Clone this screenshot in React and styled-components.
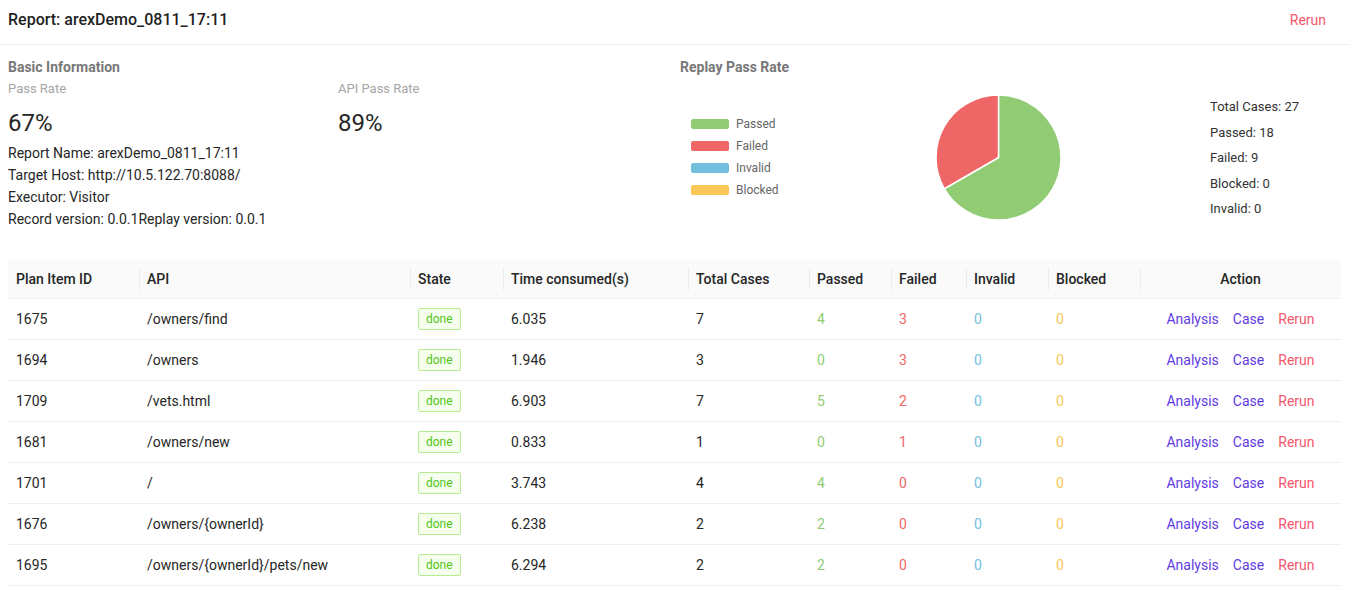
import React from "react";
import styled, { createGlobalStyle } from "styled-components";

const Global = createGlobalStyle`
  html, body { margin: 0; padding: 0; background: #fff; }
  body {
    font-family: Roboto, "Open Sans", sans-serif;
    font-size: 14px;
    color: rgba(0,0,0,0.85);
  }
  * { box-sizing: border-box; }
`;

const COLORS = {
  passed: "#91cc75",
  failed: "#ee6666",
  invalid: "#73c0de",
  blocked: "#fac858",
  primary: "#603be3",
  danger: "#f5576c",
};

const Page = styled.div`
  width: 1350px;
`;

const Header = styled.div`
  height: 45px;
  display: flex;
  align-items: center;
  justify-content: space-between;
  padding: 0 24px 4px 8px;
  border-bottom: 1px solid #f0f0f0;
`;

const Title = styled.h1`
  margin: 0;
  font-size: 16px;
  font-weight: 500;
  color: #1f1f1f;
  line-height: 24px;
`;

const LinkButton = styled.a`
  font-size: 14px;
  line-height: 22px;
  cursor: pointer;
  color: ${(p) => (p.$danger ? COLORS.danger : COLORS.primary)};
`;

const Content = styled.div`
  padding: 11px 9px 0 8px;
`;

const Overview = styled.div`
  display: grid;
  grid-template-columns: 672px 1fr;
`;

const SectionTitle = styled.div`
  font-size: 14px;
  font-weight: 700;
  color: #777;
  line-height: 22px;
`;

const StatGrid = styled.div`
  display: grid;
  grid-template-columns: 330px 330px;
`;

const StatTitle = styled.div`
  font-size: 13px;
  line-height: 22px;
  color: #a6a6a6;
  margin-bottom: 4px;
`;

const StatValue = styled.div`
  font-size: 24px;
  line-height: 38px;
  color: #262626;
`;

const InfoLine = styled.div`
  font-size: 14px;
  line-height: 22px;
  color: #262626;
`;

const ChartRow = styled.div`
  display: grid;
  grid-template-columns: 253px 130px auto;
`;

const Legend = styled.div`
  padding: 35px 0 0 11px;
  display: flex;
  flex-direction: column;
`;

const LegendItem = styled.div`
  display: flex;
  align-items: center;
  height: 22px;
  font-family: Roboto, sans-serif;
  font-size: 12px;
  color: #666;
`;

const Swatch = styled.span`
  width: 38px;
  height: 10px;
  border-radius: 2px;
  margin-right: 7px;
  background: ${(p) => p.$color};
`;

const PieSvg = styled.svg`
  margin-top: 15px;
  display: block;
`;

const Totals = styled.div`
  margin: 16px 0 0 147px;
  font-family: Roboto, sans-serif;
  font-size: 13px;
  line-height: 25.5px;
  color: #333;
`;

const Table = styled.table`
  margin-top: 30px;
  width: 1333px;
  border-collapse: collapse;
  table-layout: fixed;
`;

const Th = styled.th`
  position: relative;
  background: #fafafa;
  font-weight: 500;
  text-align: ${(p) => p.$align || "left"};
  color: #262626;
  font-size: 14px;
  line-height: 22px;
  padding: 8px 8px;
  height: 37px;
  border-bottom: 1px solid #f0f0f0;
  &::before {
    content: "";
    display: ${(p) => (p.$first ? "none" : "block")};
    position: absolute;
    left: 0;
    top: 50%;
    transform: translateY(-50%);
    width: 1px;
    height: 22px;
    background: #ececec;
  }
`;

const Td = styled.td`
  padding: 9px 8px;
  line-height: 22px;
  height: 40px;
  font-size: 14px;
  color: ${(p) => p.$color || "#262626"};
  text-align: ${(p) => p.$align || "left"};
  border-bottom: 1px solid #f0f0f0;
  vertical-align: middle;
`;

const Tag = styled.span`
  display: inline-block;
  vertical-align: top;
  font-size: 12px;
  line-height: 20px;
  padding: 0 7px;
  border: 1px solid #b7eb8f;
  background: #f6ffed;
  color: #52c41a;
  border-radius: 2px;
`;

const Actions = styled.div`
  display: flex;
  justify-content: center;
  gap: 14px;
`;

const columns = [
  { key: "id", title: "Plan Item ID", width: 131 },
  { key: "api", title: "API", width: 271 },
  { key: "state", title: "State", width: 93 },
  { key: "time", title: "Time consumed(s)", width: 185 },
  { key: "total", title: "Total Cases", width: 121 },
  { key: "passed", title: "Passed", width: 82 },
  { key: "failed", title: "Failed", width: 75 },
  { key: "invalid", title: "Invalid", width: 82 },
  { key: "blocked", title: "Blocked", width: 92 },
  { key: "action", title: "Action", width: 201 },
];

const rows = [
  ["1675", "/owners/find", "6.035", 7, 4, 3, 0, 0],
  ["1694", "/owners", "1.946", 3, 0, 3, 0, 0],
  ["1709", "/vets.html", "6.903", 7, 5, 2, 0, 0],
  ["1681", "/owners/new", "0.833", 1, 0, 1, 0, 0],
  ["1701", "/", "3.743", 4, 4, 0, 0, 0],
  ["1676", "/owners/{ownerId}", "6.238", 2, 2, 0, 0, 0],
  ["1695", "/owners/{ownerId}/pets/new", "6.294", 2, 2, 0, 0, 0],
];

function Pie() {
  const cx = 65.5;
  const cy = 64.5;
  const r = 62.5;
  const a = (240 * Math.PI) / 180;
  const px = cx + r * Math.sin(a);
  const py = cy - r * Math.cos(a);
  return (
    <PieSvg width="130" height="130" viewBox="0 0 130 130">
      <path
        d={`M${cx} ${cy} L${cx} ${cy - r} A${r} ${r} 0 1 1 ${px} ${py} Z`}
        fill={COLORS.passed}
        stroke="#fff"
        strokeWidth="1.5"
        strokeLinejoin="round"
      />
      <path
        d={`M${cx} ${cy} L${px} ${py} A${r} ${r} 0 0 1 ${cx} ${cy - r} Z`}
        fill={COLORS.failed}
        stroke="#fff"
        strokeWidth="1.5"
        strokeLinejoin="round"
      />
    </PieSvg>
  );
}

export default function App() {
  return (
    <Page>
      <Global />
      <Header>
        <Title>Report: arexDemo_0811_17:11</Title>
        <LinkButton $danger>Rerun</LinkButton>
      </Header>
      <Content>
        <Overview>
          <div>
            <SectionTitle>Basic Information</SectionTitle>
            <StatGrid>
              <div>
                <StatTitle>Pass Rate</StatTitle>
                <StatValue>67%</StatValue>
              </div>
              <div>
                <StatTitle>API Pass Rate</StatTitle>
                <StatValue>89%</StatValue>
              </div>
            </StatGrid>
            <InfoLine>Report Name: arexDemo_0811_17:11</InfoLine>
            <InfoLine>Target Host: http://10.5.122.70:8088/</InfoLine>
            <InfoLine>Executor: Visitor</InfoLine>
            <InfoLine>Record version: 0.0.1Replay version: 0.0.1</InfoLine>
          </div>
          <div>
            <SectionTitle>Replay Pass Rate</SectionTitle>
            <ChartRow>
              <Legend>
                <LegendItem><Swatch $color={COLORS.passed} />Passed</LegendItem>
                <LegendItem><Swatch $color={COLORS.failed} />Failed</LegendItem>
                <LegendItem><Swatch $color={COLORS.invalid} />Invalid</LegendItem>
                <LegendItem><Swatch $color={COLORS.blocked} />Blocked</LegendItem>
              </Legend>
              <Pie />
              <Totals>
                <div>Total Cases: 27</div>
                <div>Passed: 18</div>
                <div>Failed: 9</div>
                <div>Blocked: 0</div>
                <div>Invalid: 0</div>
              </Totals>
            </ChartRow>
          </div>
        </Overview>
        <Table>
          <colgroup>
            {columns.map((c) => (
              <col key={c.key} style={{ width: c.width }} />
            ))}
          </colgroup>
          <thead>
            <tr>
              {columns.map((c, i) => (
                <Th key={c.key} $first={i === 0} $align={c.key === "action" ? "center" : "left"}>
                  {c.title}
                </Th>
              ))}
            </tr>
          </thead>
          <tbody>
            {rows.map((r) => (
              <tr key={r[0]}>
                <Td>{r[0]}</Td>
                <Td>{r[1]}</Td>
                <Td><Tag>done</Tag></Td>
                <Td>{r[2]}</Td>
                <Td>{r[3]}</Td>
                <Td $color={COLORS.passed}>{r[4]}</Td>
                <Td $color={COLORS.failed}>{r[5]}</Td>
                <Td $color={COLORS.invalid}>{r[6]}</Td>
                <Td $color={COLORS.blocked}>{r[7]}</Td>
                <Td $align="center">
                  <Actions>
                    <LinkButton>Analysis</LinkButton>
                    <LinkButton>Case</LinkButton>
                    <LinkButton $danger>Rerun</LinkButton>
                  </Actions>
                </Td>
              </tr>
            ))}
          </tbody>
        </Table>
      </Content>
    </Page>
  );
}
